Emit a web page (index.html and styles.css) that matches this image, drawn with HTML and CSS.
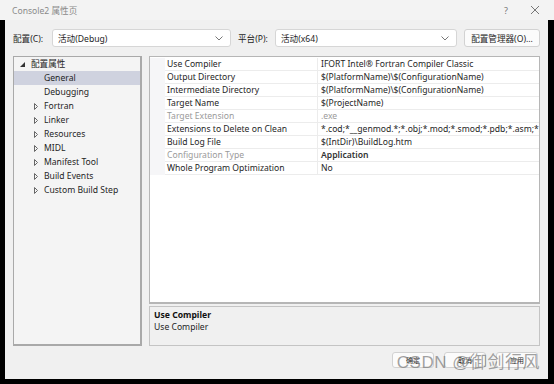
FILE: index.html
```html
<!DOCTYPE html>
<html lang="zh-CN">
<head>
  <meta charset="UTF-8" />
  <title>Console2 属性页</title>
  <link rel="stylesheet" href="styles.css">
</head>
<body>
  <div class="titlebar">
    <span class="title">Console2 属性页</span>
    <span class="title-btns">
      <span class="help">?</span>
      <svg class="close" width="10" height="10" viewBox="0 0 10 10"><path d="M1 1L9 9M9 1L1 9" stroke="#777" stroke-width="1" fill="none"/></svg>
    </span>
  </div>

  <div class="dialog">
    <div class="toolbar">
      <label class="lbl">配置(C):</label>
      <div class="select wide1"><span>活动(Debug)</span><svg width="8" height="5" viewBox="0 0 8 5"><path d="M0.5 0.5L4 4L7.5 0.5" stroke="#777" fill="none"/></svg></div>
      <label class="lbl">平台(P):</label>
      <div class="select wide2"><span>活动(x64)</span><svg width="8" height="5" viewBox="0 0 8 5"><path d="M0.5 0.5L4 4L7.5 0.5" stroke="#777" fill="none"/></svg></div>
      <button class="btn mgr">配置管理器(O)...</button>
    </div>

    <div class="main">
      <div class="tree">
        <div class="node root"><svg class="tri" width="5" height="5" viewBox="0 0 5 5"><path d="M5 0L5 5L0 5Z" fill="#333"/></svg>配置属性</div>
        <div class="node leaf selected">General</div>
        <div class="node leaf">Debugging</div>
        <div class="node"><svg class="arr" width="4" height="7" viewBox="0 0 4 7"><path d="M0.5 0.5L3.5 3.5L0.5 6.5Z" stroke="#666" fill="none"/></svg>Fortran</div>
        <div class="node"><svg class="arr" width="4" height="7" viewBox="0 0 4 7"><path d="M0.5 0.5L3.5 3.5L0.5 6.5Z" stroke="#666" fill="none"/></svg>Linker</div>
        <div class="node"><svg class="arr" width="4" height="7" viewBox="0 0 4 7"><path d="M0.5 0.5L3.5 3.5L0.5 6.5Z" stroke="#666" fill="none"/></svg>Resources</div>
        <div class="node"><svg class="arr" width="4" height="7" viewBox="0 0 4 7"><path d="M0.5 0.5L3.5 3.5L0.5 6.5Z" stroke="#666" fill="none"/></svg>MIDL</div>
        <div class="node"><svg class="arr" width="4" height="7" viewBox="0 0 4 7"><path d="M0.5 0.5L3.5 3.5L0.5 6.5Z" stroke="#666" fill="none"/></svg>Manifest Tool</div>
        <div class="node"><svg class="arr" width="4" height="7" viewBox="0 0 4 7"><path d="M0.5 0.5L3.5 3.5L0.5 6.5Z" stroke="#666" fill="none"/></svg>Build Events</div>
        <div class="node"><svg class="arr" width="4" height="7" viewBox="0 0 4 7"><path d="M0.5 0.5L3.5 3.5L0.5 6.5Z" stroke="#666" fill="none"/></svg>Custom Build Step</div>
      </div>

      <div class="right">
        <div class="grid">
          <div class="row"><div class="gut"></div><div class="name">Use Compiler</div><div class="val">IFORT Intel® Fortran Compiler Classic</div></div>
          <div class="row"><div class="gut"></div><div class="name">Output Directory</div><div class="val">$(PlatformName)\$(ConfigurationName)</div></div>
          <div class="row"><div class="gut"></div><div class="name">Intermediate Directory</div><div class="val">$(PlatformName)\$(ConfigurationName)</div></div>
          <div class="row"><div class="gut"></div><div class="name">Target Name</div><div class="val">$(ProjectName)</div></div>
          <div class="row dim"><div class="gut"></div><div class="name">Target Extension</div><div class="val">.exe</div></div>
          <div class="row"><div class="gut"></div><div class="name">Extensions to Delete on Clean</div><div class="val">*.cod;*__genmod.*;*.obj;*.mod;*.smod;*.pdb;*.asm;*.lst;*</div></div>
          <div class="row"><div class="gut"></div><div class="name">Build Log File</div><div class="val">$(IntDir)\BuildLog.htm</div></div>
          <div class="row dim"><div class="gut"></div><div class="name">Configuration Type</div><div class="val strong">Application</div></div>
          <div class="row"><div class="gut"></div><div class="name">Whole Program Optimization</div><div class="val">No</div></div>
        </div>
        <div class="desc">
          <div class="desc-title">Use Compiler</div>
          <div>Use Compiler</div>
        </div>
      </div>
    </div>

    <div class="footer">
      <button class="btn small">确定</button>
      <button class="btn small">取消</button>
      <button class="btn small">应用</button>
    </div>
    <div class="watermark">CSDN @御剑行风</div>
  </div>
</body>
</html>
```

FILE: styles.css
```css
body {
  margin: 0;
  width: 554px;
  height: 384px;
  overflow: hidden;
  background: #000;
  font-family: "Noto Sans", "Noto Sans CJK SC", sans-serif;
  font-size: 8.6px;
  color: #1e1e1e;
}

.titlebar {
  height: 20px;
  background: #f3f3f3;
  display: flex;
  align-items: center;
  justify-content: space-between;
  padding: 0 14px 0 12px;
}
.title {
  color: #8a8a8a;
  font-size: 8.6px;
}
.title-btns {
  display: flex;
  align-items: center;
  gap: 22px;
}
.help {
  color: #777;
  font-size: 9px;
}

.dialog {
  position: relative;
  height: 359px;
  margin: 0 6px 0 5px;
  background: #f0f0f0;
  padding: 9px 8px 0 8px;
  box-sizing: border-box;
  display: flex;
  flex-direction: column;
}

.toolbar {
  display: flex;
  align-items: center;
  height: 18px;
}
.lbl {
  width: 39px;
  flex-shrink: 0;
}
.select {
  height: 18px;
  box-sizing: border-box;
  background: #fff;
  border: 1px solid #d6d6d6;
  border-radius: 3px;
  display: flex;
  align-items: center;
  justify-content: space-between;
  padding: 0 7px 0 5px;
}
.wide1 { width: 179px; margin-right: 7px; }
.wide2 { width: 182px; margin-left: -2px; margin-right: 7px; }

.btn {
  font-family: inherit;
  font-size: 8.6px;
  color: #1e1e1e;
  background: #fbfbfb;
  border: 1px solid #d2d2d2;
  border-radius: 3px;
  padding: 0;
  height: 18px;
}
.mgr { width: 76px; }

.main {
  display: flex;
  gap: 7px;
  margin-top: 9px;
  height: 290px;
}

.tree {
  width: 129px;
  flex-shrink: 0;
  box-sizing: border-box;
  background: #f4f4f4;
  border: 1px solid #a9a9a9;
  border-bottom-width: 2px;
  border-right-width: 2px;
  overflow: hidden;
}
.node {
  height: 14px;
  line-height: 14px;
  display: flex;
  align-items: center;
  padding-left: 20px;
  white-space: nowrap;
}
.node .arr { margin-right: 6px; flex-shrink: 0; }
.node.root { padding-left: 6px; }
.node.root .tri { margin-right: 6px; }
.node.leaf { padding-left: 30px; }
.node.selected { background: #cfd2df; }

.right {
  flex: 1;
  min-width: 0;
  display: flex;
  flex-direction: column;
  gap: 2px;
}
.grid {
  flex: 1;
  background: #fff;
  border: 1px solid #b6b6b6;
  border-bottom-width: 2px;
  padding-top: 1px;
  overflow: hidden;
}
.row {
  display: flex;
  height: 13px;
  line-height: 12px;
}
.gut {
  width: 15px;
  flex-shrink: 0;
  background: #f6f6f8;
}
.name, .val {
  border-bottom: 1px solid #ececec;
  white-space: nowrap;
  overflow: hidden;
}
.name {
  width: 150px;
  flex-shrink: 0;
  padding-left: 2px;
  border-right: 1px solid #ececec;
}
.val {
  flex: 1;
  min-width: 0;
  padding-left: 3px;
}
.row.dim .name, .row.dim .val { color: #9a9a9a; }
.row.dim .val.strong { color: #333; font-weight: 600; }

.desc {
  height: 40px;
  box-sizing: border-box;
  border: 1px solid #c4c4c4;
  background: #f0f0f0;
  padding: 2px 4px;
  line-height: 12px;
}
.desc-title { font-weight: 700; color: #111; }

.footer {
  display: flex;
  justify-content: flex-end;
  gap: 10px;
  margin-top: 6px;
  padding-right: 2px;
}
.btn.small {
  width: 42px;
  height: 16px;
  font-size: 7px;
}

.watermark {
  position: absolute;
  right: 8px;
  bottom: 6px;
  font-size: 17px;
  color: rgba(120, 120, 120, 0.7);
  font-family: "Liberation Sans", "Noto Sans CJK SC", sans-serif;
  letter-spacing: 0.5px;
}
```
